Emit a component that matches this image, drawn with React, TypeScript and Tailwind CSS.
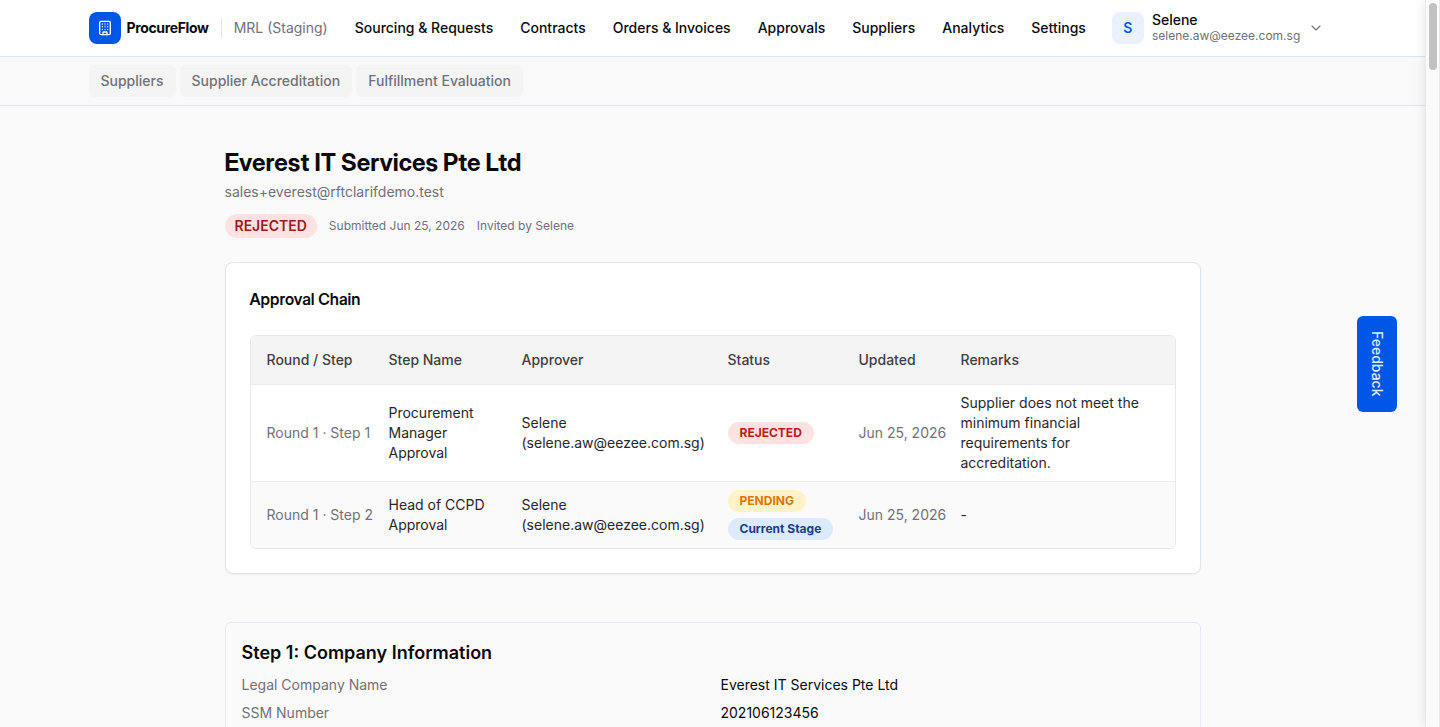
import { Building, ChevronDown } from "lucide-react";
import type { ReactNode } from "react";

const navItems = [
  "Sourcing & Requests",
  "Contracts",
  "Orders & Invoices",
  "Approvals",
  "Suppliers",
  "Analytics",
  "Settings",
];

const subNavItems = ["Suppliers", "Supplier Accreditation", "Fulfillment Evaluation"];

type Tone = "rejected" | "pending" | "current";

interface ApprovalStep {
  step: string;
  name: string;
  approver: string;
  email: string;
  badges: { label: string; tone: Tone }[];
  updated: string;
  remarks: string;
}

const approvalSteps: ApprovalStep[] = [
  {
    step: "Round 1 · Step 1",
    name: "Procurement Manager Approval",
    approver: "Selene",
    email: "(selene.aw@eezee.com.sg)",
    badges: [{ label: "REJECTED", tone: "rejected" }],
    updated: "Jun 25, 2026",
    remarks: "Supplier does not meet the minimum financial requirements for accreditation.",
  },
  {
    step: "Round 1 · Step 2",
    name: "Head of CCPD Approval",
    approver: "Selene",
    email: "(selene.aw@eezee.com.sg)",
    badges: [
      { label: "PENDING", tone: "pending" },
      { label: "Current Stage", tone: "current" },
    ],
    updated: "Jun 25, 2026",
    remarks: "-",
  },
];

const companyInfo = [
  { label: "Legal Company Name", value: "Everest IT Services Pte Ltd" },
  { label: "SSM Number", value: "202106123456" },
];

const toneClasses: Record<Tone, string> = {
  rejected: "bg-[#fee2e2] text-[#b91c1c]",
  pending: "bg-[#fef3c7] text-[#d97706]",
  current: "bg-[#dbeafe] text-[#1e3a8a]",
};

function Badge({ tone, children }: { tone: Tone; children: ReactNode }) {
  return (
    <span
      className={`inline-flex h-[22px] items-center rounded-full px-3 text-xs font-bold whitespace-nowrap ${toneClasses[tone]}`}
    >
      {children}
    </span>
  );
}

function Header() {
  return (
    <header className="border-b border-[#dfe3ec] bg-white">
      <div className="mx-auto flex h-14 max-w-7xl items-center px-4">
        <a href="#home" className="flex items-center gap-1.5">
          <span className="flex size-8 items-center justify-center rounded-lg bg-[#0057e7] text-white">
            <Building className="size-4" />
          </span>
          <span className="text-sm font-bold tracking-tight">ProcureFlow</span>
        </a>
        <span className="ml-3 h-5 border-l border-[#dfe3ec]" />
        <span className="ml-3 text-sm text-[#71717a]">MRL (Staging)</span>
        <nav className="ml-[27px] flex items-center gap-[27px]">
          {navItems.map((item) => (
            <a key={item} href="#nav" className="text-sm font-medium whitespace-nowrap">
              {item}
            </a>
          ))}
        </nav>
        <button type="button" className="ml-[26px] flex items-center gap-2 text-left">
          <span className="flex size-8 items-center justify-center rounded-lg bg-[#eaf2ff] text-sm font-semibold text-[#0057e7]">
            S
          </span>
          <span className="flex flex-col">
            <span className="text-sm leading-4 font-medium">Selene</span>
            <span className="text-xs leading-4 text-[#71717a]">selene.aw@eezee.com.sg</span>
          </span>
          <ChevronDown className="size-4 text-[#71717a]" strokeWidth={1.75} />
        </button>
      </div>
    </header>
  );
}

function SubNav() {
  return (
    <nav className="border-b border-[#dfe3ec] bg-[#f9f9f9]">
      <div className="mx-auto flex h-12 max-w-7xl items-center gap-1 px-4">
        {subNavItems.map((item) => (
          <a
            key={item}
            href="#subnav"
            className="flex h-8 items-center rounded-md bg-[#f4f4f4] px-3 text-sm font-medium text-[#71717a]"
          >
            {item}
          </a>
        ))}
      </div>
    </nav>
  );
}

function ApprovalTable() {
  return (
    <div className="overflow-hidden rounded-md border border-[#e8e8e8]">
      <table className="w-full table-fixed text-left text-sm text-[#27272a]">
        <colgroup>
          <col className="w-[122px]" />
          <col className="w-[133px]" />
          <col className="w-[206px]" />
          <col className="w-[131px]" />
          <col className="w-[102px]" />
          <col />
        </colgroup>
        <thead className="bg-[#f4f4f4] text-[#3f3f46]">
          <tr className="h-12">
            {["Round / Step", "Step Name", "Approver", "Status", "Updated", "Remarks"].map((title) => (
              <th key={title} scope="col" className="pl-4 font-medium">
                {title}
              </th>
            ))}
          </tr>
        </thead>
        <tbody>
          {approvalSteps.map((row) => (
            <tr key={row.step} className="border-t border-[#ececec] even:bg-[#fafafa]">
              <td className="py-2 pl-4 whitespace-nowrap text-[#71717a]">{row.step}</td>
              <td className="py-2 pr-4 pl-4">{row.name}</td>
              <td className="py-2 pl-4">
                {row.approver}
                <br />
                {row.email}
              </td>
              <td className="py-2 pl-4">
                <div className="flex flex-col items-start gap-1.5">
                  {row.badges.map((badge) => (
                    <Badge key={badge.label} tone={badge.tone}>
                      {badge.label}
                    </Badge>
                  ))}
                </div>
              </td>
              <td className="py-2 pl-4 whitespace-nowrap text-[#71717a]">{row.updated}</td>
              <td className="py-2 pr-8 pl-4">{row.remarks}</td>
            </tr>
          ))}
        </tbody>
      </table>
    </div>
  );
}

export default function App() {
  return (
    <div className="flex h-screen overflow-hidden bg-[#fafafa] font-[Inter,sans-serif] text-[#09090b]">
      <div className="min-w-0 flex-1">
        <Header />
        <SubNav />
        <main className="mx-auto max-w-5xl px-6 pt-10">
          <h1 className="font-['Inter_Display',Inter,sans-serif] text-2xl leading-[34px] font-bold">
            Everest IT Services Pte Ltd
          </h1>
          <p className="mt-0.5 text-sm text-[#71717a]">sales+everest@rftclarifdemo.test</p>
          <div className="mt-3 flex items-center gap-3 text-xs text-[#71717a]">
            <span className="flex h-6 items-center rounded-full bg-[#fee2e2] px-2.5 text-sm font-semibold text-[#991b1b]">
              REJECTED
            </span>
            <span>Submitted Jun 25, 2026</span>
            <span>Invited by Selene</span>
          </div>

          <section className="mt-6 rounded-lg border border-[#dfe3ec] bg-white p-6 shadow-xs">
            <h2 className="mb-6 font-['Inter_Display',Inter,sans-serif] text-base font-semibold">
              Approval Chain
            </h2>
            <ApprovalTable />
          </section>

          <section className="mt-12 rounded-md border border-[#e6eaf0] p-4">
            <h2 className="text-lg leading-7 font-semibold">Step 1: Company Information</h2>
            <dl className="mt-2 grid grid-cols-2 gap-x-4 gap-y-2 text-sm">
              {companyInfo.map((entry) => (
                <div key={entry.label} className="contents">
                  <dt className="text-[#71717a]">{entry.label}</dt>
                  <dd>{entry.value}</dd>
                </div>
              ))}
            </dl>
          </section>
        </main>
      </div>

      <div className="flex w-[15px] justify-center border-x border-[#e8e8e8] bg-[#fafafa] pt-[3px] shadow-[0_0_12px_rgba(0,0,0,0.1)]">
        <span className="h-[67px] w-2 rounded-full bg-[#c1c1c1]" />
      </div>

      <button
        type="button"
        className="fixed top-1/2 right-[43px] flex h-24 w-10 -translate-y-1/2 items-center justify-center rounded-md bg-[#0057e7] text-sm font-medium text-[#dfeaff] [writing-mode:vertical-rl]"
      >
        Feedback
      </button>
    </div>
  );
}
